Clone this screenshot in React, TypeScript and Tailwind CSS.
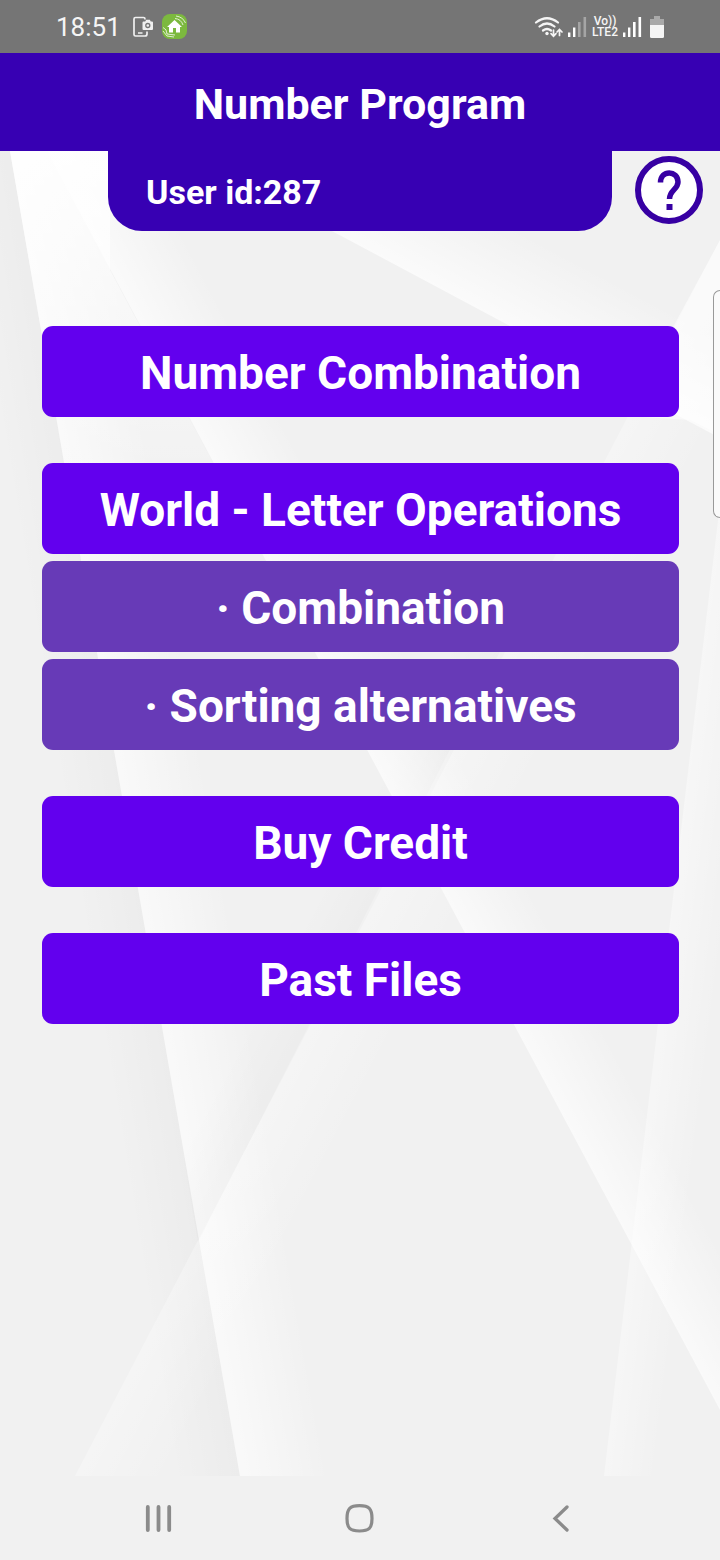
const menu = [
	[{ label: "Number Combination", sub: false }],
	[
		{ label: "World - Letter Operations", sub: false },
		{ label: "· Combination", sub: true },
		{ label: "· Sorting alternatives", sub: true },
	],
	[{ label: "Buy Credit", sub: false }],
	[{ label: "Past Files", sub: false }],
]

function Signal({ strong }: { strong: boolean }) {
	return (
		<svg className="h-5 w-[19px]" viewBox="0 0 19 20" fill="#fff">
			<rect x="0" y="15.500" width="2.400" height="4.500" />
			<rect x="5" y="10.500" width="2.400" height="9.500" />
			<rect x="10" y="5" width="2.600" height="15" opacity={strong ? 1 : 0.35} />
			<rect x="15.500" y="0" width="2.600" height="20" opacity={strong ? 1 : 0.35} />
		</svg>
	)
}

function StatusBar() {
	return (
		<div className="flex h-[53px] items-center justify-between bg-[#757575] px-[56px] text-[#f5f5f5]">
			<div className="flex items-center">
				<span className="w-[76px] text-[26px] leading-8">18:51</span>
				<svg className="h-[22px] w-[22px]" viewBox="0 0 22 22" fill="none" stroke="#f0f0f0" strokeWidth="1.700">
					<path d="M13 3.500V3q0-1.500-1.500-1.500h-8Q2 1.500 2 3v15.500Q2 20 3.500 20h9.500q2 0 2-2v-2.500M6 17h4.500" />
					<path d="M10.500 6.500q0-1 1-1h1.700l1-1.700h3.600l1 1.700h1.200q1 0 1 1V13q0 1-1 1h-8.500q-1 0-1-1z" fill="#f0f0f0" stroke="none" />
					<circle cx="15.800" cy="9.500" r="2" stroke="#757575" strokeWidth="1.300" />
				</svg>
				<svg className="ml-2 size-[25px]" viewBox="0 0 25 25" fill="none" stroke="#fff">
					<rect width="25" height="25" rx="8" fill="#7cb93e" stroke="none" />
					<path d="M5 13 12.500 6 20 13h-2v5.500h-4v-4.500h-3v4.500H7V13z" fill="#fff" stroke="none" />
					<path d="M13 4.500q6 .5 8 6.500M14 2q7 1 9.500 7M1 13.500q4 1.500 4 6.500l8 1M1 17l4 5 7 1" strokeWidth="0.900" opacity="0.850" />
				</svg>
			</div>
			<div className="flex items-center">
				<svg className="h-[24px] w-[30px]" viewBox="0 0 30 24" fill="none" stroke="#f5f5f5" strokeWidth="2.200" strokeLinecap="round">
					<path d="M2 7.500q11-8.500 22 0M5.500 11.500q7.500-6 15 0M9 15.500q4-3 8 0" />
					<circle cx="13" cy="18.500" r="1.700" fill="#f5f5f5" stroke="none" />
					<path d="M19.500 15v6M17 18.700l2.500 2.500 2.500-2.500M25.500 20.500v-6M23 17l2.500-2.500L28 17" strokeWidth="1.700" />
				</svg>
				<div className="ml-1"><Signal strong={false} /></div>
				<div className="ml-1 flex w-[28px] flex-col items-center text-[12px] leading-[11px] font-medium">
					<span>Vo))</span>
					<span>LTE2</span>
				</div>
				<div className="ml-1"><Signal strong /></div>
				<svg className="ml-2 h-[22px] w-[14px]" viewBox="0 0 14 22">
					<path d="M4 0h6v3h4v7H0V3h4z" fill="#a9a9a9" />
					<path d="M0 9h14v11.500q0 1.500-1.500 1.500h-11Q0 22 0 20.500z" fill="#f5f5f5" />
				</svg>
			</div>
		</div>
	)
}

// folded paper: each fold is bright along its edge and fades away from it
function Backdrop() {
	return (
		<svg className="absolute inset-0 size-full" viewBox="0 151 720 1325" preserveAspectRatio="none" aria-hidden="true">
			<defs>
				<linearGradient id="left" gradientUnits="userSpaceOnUse" x1="125" y1="813" x2="210" y2="798">
					<stop offset="0" stopColor="#fff" stopOpacity="0.600" />
					<stop offset="1" stopColor="#fff" stopOpacity="0" />
				</linearGradient>
				<linearGradient id="leftShade" gradientUnits="userSpaceOnUse" x1="125" y1="813" x2="65" y2="823">
					<stop offset="0" stopColor="#000" stopOpacity="0.020" />
					<stop offset="1" stopColor="#000" stopOpacity="0" />
				</linearGradient>
				<linearGradient id="diagonal" gradientUnits="userSpaceOnUse" x1="383" y1="780" x2="453" y2="743">
					<stop offset="0" stopColor="#fff" stopOpacity="0.650" />
					<stop offset="1" stopColor="#fff" stopOpacity="0" />
				</linearGradient>
				<linearGradient id="top" gradientUnits="userSpaceOnUse" x1="420" y1="278" x2="462" y2="199">
					<stop offset="0" stopColor="#fff" stopOpacity="0.700" />
					<stop offset="1" stopColor="#fff" stopOpacity="0" />
				</linearGradient>
				<linearGradient id="rising" gradientUnits="userSpaceOnUse" x1="397" y1="858" x2="470" y2="896">
					<stop offset="0" stopColor="#fff" stopOpacity="0.300" />
					<stop offset="1" stopColor="#fff" stopOpacity="0" />
				</linearGradient>
				<linearGradient id="risingShade" gradientUnits="userSpaceOnUse" x1="397" y1="858" x2="350" y2="833">
					<stop offset="0" stopColor="#000" stopOpacity="0.018" />
					<stop offset="1" stopColor="#000" stopOpacity="0" />
				</linearGradient>
				<linearGradient id="right" gradientUnits="userSpaceOnUse" x1="664" y1="973" x2="719" y2="980">
					<stop offset="0" stopColor="#fff" stopOpacity="0.400" />
					<stop offset="1" stopColor="#fff" stopOpacity="0" />
				</linearGradient>
				<linearGradient id="glow" gradientUnits="userSpaceOnUse" x1="0" y1="151" x2="0" y2="500">
					<stop offset="0" stopColor="#fff" stopOpacity="0.900" />
					<stop offset="1" stopColor="#fff" stopOpacity="0" />
				</linearGradient>
			</defs>
			<path d="M10 151 240 1476H0V151z" fill="url(#leftShade)" />
			<path d="M10 151 240 1476H720V151z" fill="url(#left)" />
			<path d="M10 151H110V270L213 463 64 463z" fill="url(#glow)" />
			<path d="M506 640 198 1242 155 998 350 640z" fill="url(#risingShade)" />
			<path d="M47 151 720 1410V151z" fill="url(#diagonal)" />
			<path d="M182 151 720 438V151z" fill="url(#top)" />
			<path d="M720 240 75 1476H720z" fill="url(#rising)" />
			<path d="M720 240 625 416 690 420 720 435z" fill="#fff" opacity="0.500" />
			<path d="M724 470 604 1476H720z" fill="url(#right)" />
		</svg>
	)
}

function MenuButton({ label, sub }: { label: string, sub: boolean }) {
	return (
		<button
			className={`h-[91px] w-full rounded-[11px] pt-0.5 text-[46px] leading-[54px] font-bold text-white ${sub ? "bg-[#673ab7]" : "bg-[#6200ee]"}`}
			type="button"
		>
			{label}
		</button>
	)
}

function NavBar() {
	return (
		<nav className="grid h-[84px] grid-cols-3 bg-[#f1f1f1] px-[58px]">
			<button aria-label="Recent apps" className="flex items-center justify-center" type="button">
				<svg className="size-8" viewBox="0 0 32 32" fill="none" stroke="#8b8b8b" strokeWidth="3.800" strokeLinecap="round">
					<path d="M4.800 5v23M15.500 5v23M26.200 5v23" />
				</svg>
			</button>
			<button aria-label="Home" className="flex items-center justify-center" type="button">
				<svg className="size-8" viewBox="0 0 32 32" fill="none" stroke="#8b8b8b" strokeWidth="3.200">
					<path d="M15.500 3.700c9.500 0 12.500 3 12.500 12.800s-3 12.500-12.500 12.500S3 26.300 3 16.500s3-12.800 12.500-12.800z" />
				</svg>
			</button>
			<button aria-label="Back" className="flex items-center justify-center" type="button">
				<svg className="size-8" viewBox="0 0 32 32" fill="none" stroke="#8b8b8b" strokeWidth="3.300" strokeLinecap="round">
					<path d="M22 5 10 16.500 22 28" />
				</svg>
			</button>
		</nav>
	)
}

export default function App() {
	return (
		<div className="flex min-h-screen flex-col bg-[#f1f1f1] font-[Roboto,sans-serif]">
			<StatusBar />
			<header className="flex h-[98px] items-center justify-center bg-[#3700b3] pt-1">
				<h1 className="text-[43px] leading-[50px] font-bold text-white">Number Program</h1>
			</header>
			<main className="relative flex-1">
				<Backdrop />
				<div className="relative grid h-20 grid-cols-[15%_70%_15%]">
					<div className="col-start-2 flex items-center rounded-b-[34px] bg-[#3700b3] px-[38px] pt-0.5 text-[34px] font-bold text-white">
						User id:287
					</div>
					<div className="flex items-start justify-end pt-[5px] pr-[17px]">
						<button aria-label="Help" className="size-[68px]" type="button">
							<svg className="size-full" viewBox="0 0 68 68" fill="none" stroke="#3700a3">
								<circle cx="34" cy="34" r="31" fill="#fff" strokeWidth="6" />
								<path d="M25.500 26.500c0-13 17.500-12.500 17.500-.5 0 7.500-8.500 8-8.500 17" strokeWidth="5.500" />
								<path d="M31.500 48h6v6h-6z" fill="#3700a3" stroke="none" />
							</svg>
						</button>
					</div>
				</div>
				<div className="relative flex flex-col gap-[46px] pt-[95px] pr-[41px] pb-12 pl-[42px]">
					{menu.map(group => (
						<div className="flex flex-col gap-[7px]" key={group[0].label}>
							{group.map(item => <MenuButton key={item.label} label={item.label} sub={item.sub} />)}
						</div>
					))}
				</div>
				{/* edge panel handle */}
				<div className="absolute top-[139px] right-0 h-[228px] w-[7px] rounded-l-lg border border-r-0 border-[#999] bg-[#fafafa]" />
			</main>
			<NavBar />
		</div>
	)
}
